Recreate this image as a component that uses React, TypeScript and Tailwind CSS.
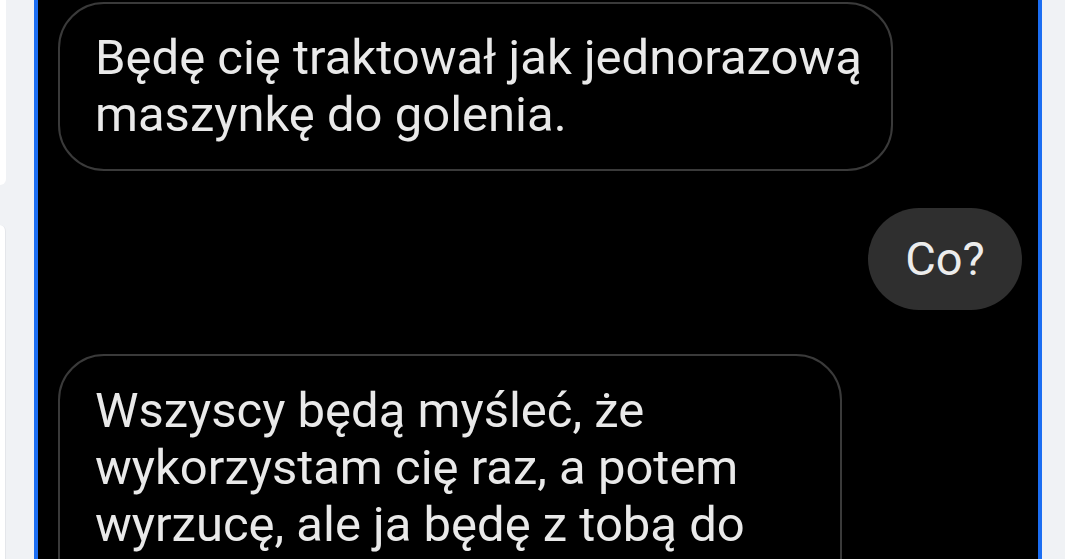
const font = { fontFamily: 'Roboto, "Noto Sans", sans-serif' };

function IncomingBubble({ lines, width, className = '' }: { lines: string[]; width: string; className?: string }) {
  return (
    <div
      className={`rounded-[46px] border-2 border-[#3a3a3a] pl-[35px] text-[49px] leading-[57px] text-[#e9e9e9] ${width} ${className}`}
      style={font}
    >
      {lines.map((line, i) => (
        <div key={i} className="whitespace-nowrap">{line}</div>
      ))}
    </div>
  );
}

export default function App() {
  return (
    <div className="flex h-[559px] w-[1065px] overflow-hidden bg-[#f0f2f5]">
      {/* left feed edge */}
      <div className="flex w-[34px] shrink-0 flex-col">
        <div className="h-[185px] w-[6px] rounded-br-[8px] bg-white" />
        <div className="mt-[40px] flex-1 w-[6px] rounded-tr-[8px] border-r border-[#e4e6ea] bg-white" />
      </div>

      {/* selected post frame */}
      <div className="flex w-[1008px] shrink-0 flex-col border-x-4 border-[#1c6ef2] bg-black">
        <div className="h-[3px] bg-white" />
        <div className="flex flex-col pt-[2px]">
          <IncomingBubble
            width="w-[835px]"
            className="ml-[20px] pt-[25px] pb-[26px]"
            lines={['Będę cię traktował jak jednorazową', 'maszynkę do golenia.']}
          />

          <div className="mr-[16px] mt-[37px] flex justify-end">
            <div
              className="flex h-[102px] w-[154px] items-center justify-center rounded-full bg-[#2f2f2f] text-[47px] text-[#ececec]"
              style={font}
            >
              Co?
            </div>
          </div>

          <IncomingBubble
            width="w-[784px]"
            className="ml-[20px] mt-[44px] h-[260px] pt-[26px]"
            lines={[
              'Wszyscy będą myśleć, że',
              'wykorzystam cię raz, a potem',
              'wyrzucę, ale ja będę z tobą do',
            ]}
          />
        </div>
      </div>

      <div className="flex-1" />
    </div>
  );
}
